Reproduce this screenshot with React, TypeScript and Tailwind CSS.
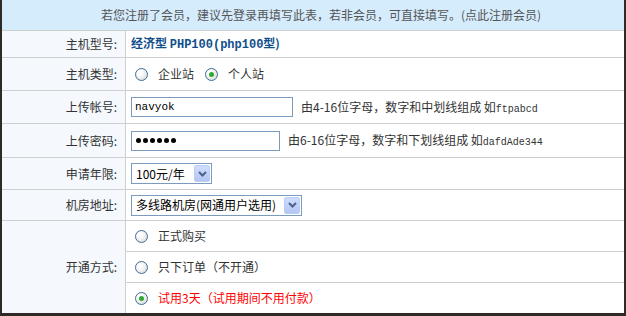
import React from "react";

const CJK = "[font-family:'Noto_Sans_CJK_SC','Noto_Sans',sans-serif]";
const MONO = "[font-family:'Liberation_Mono','Noto_Sans_CJK_SC',monospace]";

function Radio({ checked }: { checked?: boolean }) {
  return (
    <span className="relative flex items-center justify-center w-[13px] h-[13px] rounded-full border border-[#3f6d98] bg-[radial-gradient(circle_at_35%_35%,#ffffff_20%,#d2d2d2)] shrink-0">
      {checked && <span className="w-[5px] h-[5px] rounded-full bg-[#2fa82f]" />}
    </span>
  );
}

function Arrow() {
  return (
    <span className="flex items-center justify-center w-[16px] h-[17px] rounded-[2px] bg-gradient-to-b from-[#cfdcfd] to-[#b3c6f2] border border-[#bccdf5]">
      <svg width="9" height="6" viewBox="0 0 9 6">
        <path d="M1 1 L4.5 4.5 L8 1" fill="none" stroke="#4d6185" strokeWidth="2" />
      </svg>
    </span>
  );
}

function Label({ children }: { children: React.ReactNode }) {
  return (
    <div className="w-[124px] shrink-0 bg-[#f5f9fe] border-r border-[#cfcfcf] flex items-center justify-end pr-[8px] text-[12px] text-[#333]">
      {children}
    </div>
  );
}

function Row({ h, label, children }: { h: string; label: string; children: React.ReactNode }) {
  return (
    <div className={`flex ${h} border-b border-[#cfcfcf]`}>
      <Label>{label}</Label>
      <div className="flex-1 flex items-center pl-[5px] text-[12px] text-[#333]">{children}</div>
    </div>
  );
}

export default function App() {
  return (
    <div className={`w-[626px] h-[316px] bg-white border-l-2 border-r-2 border-b-[3px] border-[#2e2a26] flex flex-col ${CJK}`}>
      <div className="h-[31px] shrink-0 bg-[#d5ecfd] border-b border-[#cfcfcf] flex items-center justify-center text-[12px] text-[#555] pl-[16px]">
        若您注册了会员，建议先登录再填写此表，若非会员，可直接填写。(点此注册会员)
      </div>
      <Row h="h-[27px]" label="主机型号:">
        <span className="font-bold text-[#0f4f8c] text-[12px]">
          经济型 <span className={MONO}>PHP100(php100</span>型)
        </span>
      </Row>
      <Row h="h-[33px]" label="主机类型:">
        <div className="flex items-center pl-[4px]">
          <Radio />
          <span className="ml-[10px]">企业站</span>
          <span className="ml-[11px]"><Radio checked /></span>
          <span className="ml-[10px]">个人站</span>
        </div>
      </Row>
      <Row h="h-[33px]" label="上传帐号:">
        <div className={`w-[162px] h-[20px] border border-[#7a9bbd] flex items-center pl-[3px] text-[11px] text-black ${MONO}`}>
          navyok
        </div>
        <span className="ml-[8px]">
          由4-16位字母，数字和中划线组成 如<span className={`${MONO} text-[10px]`}>ftpabcd</span>
        </span>
      </Row>
      <Row h="h-[34px]" label="上传密码:">
        <div className="w-[149px] h-[20px] border border-[#7a9bbd] flex items-center gap-[2px] pl-[4px]">
          <span className="w-[5px] h-[5px] rounded-full bg-black" />
          <span className="w-[5px] h-[5px] rounded-full bg-black" />
          <span className="w-[5px] h-[5px] rounded-full bg-black" />
          <span className="w-[5px] h-[5px] rounded-full bg-black" />
          <span className="w-[5px] h-[5px] rounded-full bg-black" />
          <span className="w-[5px] h-[5px] rounded-full bg-black" />
        </div>
        <span className="ml-[8px]">
          由6-16位字母，数字和下划线组成 如<span className={`${MONO} text-[10px]`}>dafdAde344</span>
        </span>
      </Row>
      <Row h="h-[32px]" label="申请年限:">
        <div className="w-[81px] h-[21px] border border-[#7a9bbd] flex items-center justify-between pl-[4px] pr-[1px] text-[12px] text-black">
          <span>100元/年</span>
          <Arrow />
        </div>
      </Row>
      <Row h="h-[31px]" label="机房地址:">
        <div className="w-[171px] h-[21px] border border-[#7a9bbd] flex items-center justify-between pl-[4px] pr-[1px] text-[12px] text-black">
          <span>多线路机房(网通用户选用)</span>
          <Arrow />
        </div>
      </Row>
      <div className="flex flex-1">
        <Label>开通方式:</Label>
        <div className="flex-1 flex flex-col text-[12px] text-[#333]">
          <div className="h-[31px] border-b border-[#cfcfcf] flex items-center pl-[9px]">
            <Radio />
            <span className="ml-[10px]">正式购买</span>
          </div>
          <div className="h-[31px] border-b border-[#cfcfcf] flex items-center pl-[9px]">
            <Radio />
            <span className="ml-[10px]">只下订单（不开通）</span>
          </div>
          <div className="flex-1 flex items-center pl-[9px]">
            <Radio checked />
            <span className="ml-[10px] text-[#ff0000]">试用3天（试用期间不用付款）</span>
          </div>
        </div>
      </div>
    </div>
  );
}
